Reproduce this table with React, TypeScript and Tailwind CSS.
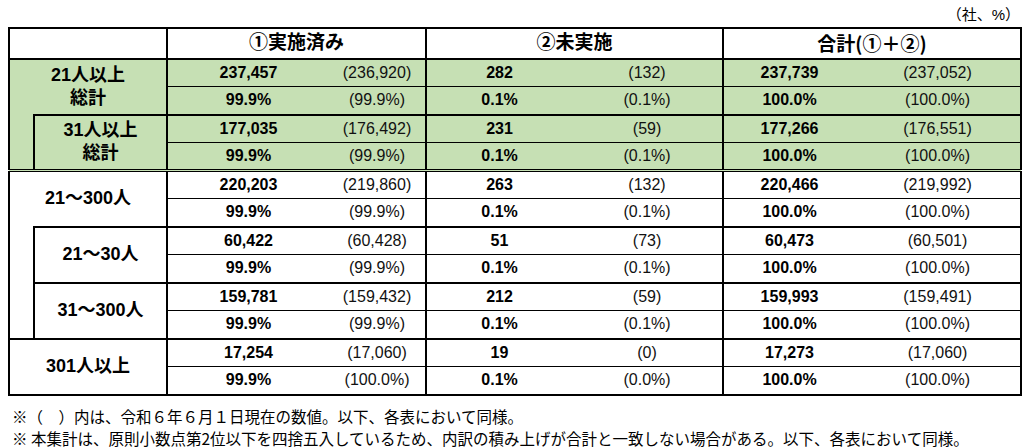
const GREEN = "bg-[#c6e0b4]";

type Pair = {
  label: string[];
  top: string[];
  pct: string[];
};

const pctStd = ["99.9%", "(99.9%)", "0.1%", "(0.1%)", "100.0%", "(100.0%)"];

const DataCells = ({
  vals,
  first,
  green,
  dbl,
}: {
  vals: string[];
  first: boolean;
  green: boolean;
  dbl?: boolean;
}) => {
  const t = first ? "border-t-2" : "border-t";
  const b = dbl ? "border-b-[3px] [border-bottom-style:double]" : "";
  const bg = green ? GREEN : "bg-white";
  return (
    <>
      {vals.map((v, i) =>
        i % 2 === 0 ? (
          <td
            key={i}
            className={`p-0 border-l-2 border-black text-center font-bold text-[16px] ${t} ${b} ${bg}`}
          >
            {v}
          </td>
        ) : (
          <td
            key={i}
            className={`p-0 border-black text-center text-[16px] text-[#111] ${t} ${b} ${bg} ${
              i === 5 ? "border-r-2" : ""
            }`}
          >
            {v}
          </td>
        )
      )}
    </>
  );
};

const App = () => {
  const g1: Pair = {
    label: ["21人以上", "総計"],
    top: ["237,457", "(236,920)", "282", "(132)", "237,739", "(237,052)"],
    pct: pctStd,
  };
  const g2: Pair = {
    label: ["31人以上", "総計"],
    top: ["177,035", "(176,492)", "231", "(59)", "177,266", "(176,551)"],
    pct: pctStd,
  };
  const w1: Pair = {
    label: ["21～300人"],
    top: ["220,203", "(219,860)", "263", "(132)", "220,466", "(219,992)"],
    pct: pctStd,
  };
  const w2: Pair = {
    label: ["21～30人"],
    top: ["60,422", "(60,428)", "51", "(73)", "60,473", "(60,501)"],
    pct: pctStd,
  };
  const w3: Pair = {
    label: ["31～300人"],
    top: ["159,781", "(159,432)", "212", "(59)", "159,993", "(159,491)"],
    pct: pctStd,
  };
  const w4: Pair = {
    label: ["301人以上"],
    top: ["17,254", "(17,060)", "19", "(0)", "17,273", "(17,060)"],
    pct: ["99.9%", "(100.0%)", "0.1%", "(0.0%)", "100.0%", "(100.0%)"],
  };

  const labelText = (l: string[]) =>
    l.map((s, i) => (
      <div key={i} className="leading-[23px]">
        {s}
      </div>
    ));

  const rowH = "h-[28px]";
  const labelCls = "p-0 text-center font-bold text-[18px] border-black";
  const headCls = "p-0 border-l-2 border-b-2 border-black text-center font-bold text-[19px]";

  return (
    <div
      className="w-[1024px] h-[447px] bg-white text-black overflow-hidden"
      style={{ fontFamily: '"Liberation Sans", "Noto Sans CJK JP", sans-serif' }}
    >
      <div className="h-[27px] pt-[5px] pr-[4px] text-right text-[15px] leading-[20px]">
        （社、%）
      </div>
      <div className="pl-[8px]">
        <table className="w-[1012px] table-fixed border-collapse border-2 border-black">
          <colgroup>
            <col className="w-[25px]" />
            <col className="w-[133px]" />
            <col className="w-[162px]" />
            <col className="w-[97px]" />
            <col className="w-[146px]" />
            <col className="w-[151px]" />
            <col className="w-[132px]" />
            <col className="w-[166px]" />
          </colgroup>
          <tbody>
            <tr className={rowH}>
              <td colSpan={2} className="p-0 border-b-2 border-black" />
              <td colSpan={2} className={headCls}>
                ①実施済み
              </td>
              <td colSpan={2} className={headCls}>
                ②未実施
              </td>
              <td
                colSpan={2}
                className={headCls}
                style={{ fontFamily: '"Noto Sans CJK JP", sans-serif' }}
              >
                合計(①＋②)
              </td>
            </tr>

            {/* 21人以上 総計 */}
            <tr className={rowH}>
              <td colSpan={2} rowSpan={2} className={`${labelCls} border-t-2 border-b-0 ${GREEN}`}>
                {labelText(g1.label)}
              </td>
              <DataCells vals={g1.top} first green />
            </tr>
            <tr className={rowH}>
              <DataCells vals={g1.pct} first={false} green />
            </tr>

            {/* 31人以上 総計 */}
            <tr className={rowH}>
              <td
                rowSpan={2}
                className={`p-0 border-t-0 border-r-2 border-black border-b-[3px] [border-bottom-style:double] ${GREEN}`}
              />
              <td
                rowSpan={2}
                className={`${labelCls} border-t-2 border-b-[3px] [border-bottom-style:double] ${GREEN}`}
              >
                {labelText(g2.label)}
              </td>
              <DataCells vals={g2.top} first green />
            </tr>
            <tr className={rowH}>
              <DataCells vals={g2.pct} first={false} green dbl />
            </tr>

            {/* 21～300人 */}
            <tr className={rowH}>
              <td colSpan={2} rowSpan={2} className={`${labelCls} border-t-2 border-b-0`}>
                {labelText(w1.label)}
              </td>
              <DataCells vals={w1.top} first green={false} />
            </tr>
            <tr className={rowH}>
              <DataCells vals={w1.pct} first={false} green={false} />
            </tr>

            <tr className={rowH}>
              <td rowSpan={4} className="p-0 border-t-0 border-r-2 border-b-2 border-black" />
              <td rowSpan={2} className={`${labelCls} border-t-2`}>
                {labelText(w2.label)}
              </td>
              <DataCells vals={w2.top} first green={false} />
            </tr>
            <tr className={rowH}>
              <DataCells vals={w2.pct} first={false} green={false} />
            </tr>

            <tr className={rowH}>
              <td rowSpan={2} className={`${labelCls} border-t-2`}>
                {labelText(w3.label)}
              </td>
              <DataCells vals={w3.top} first green={false} />
            </tr>
            <tr className={rowH}>
              <DataCells vals={w3.pct} first={false} green={false} />
            </tr>

            {/* 301人以上 */}
            <tr className={rowH}>
              <td colSpan={2} rowSpan={2} className={`${labelCls} border-t-2`}>
                {labelText(w4.label)}
              </td>
              <DataCells vals={w4.top} first green={false} />
            </tr>
            <tr className={rowH}>
              <DataCells vals={w4.pct} first={false} green={false} />
            </tr>
          </tbody>
        </table>
      </div>

      <div
        className="mt-[9px] pl-[12px] text-[15.5px] leading-[22px]"
        style={{ fontFamily: '"Noto Sans CJK JP", sans-serif' }}
      >
        <div>※（　）内は、令和６年６月１日現在の数値。以下、各表において同様。</div>
        <div>※ 本集計は、原則小数点第2位以下を四捨五入しているため、内訳の積み上げが合計と一致しない場合がある。以下、各表において同様。</div>
      </div>
    </div>
  );
};

export default App;
